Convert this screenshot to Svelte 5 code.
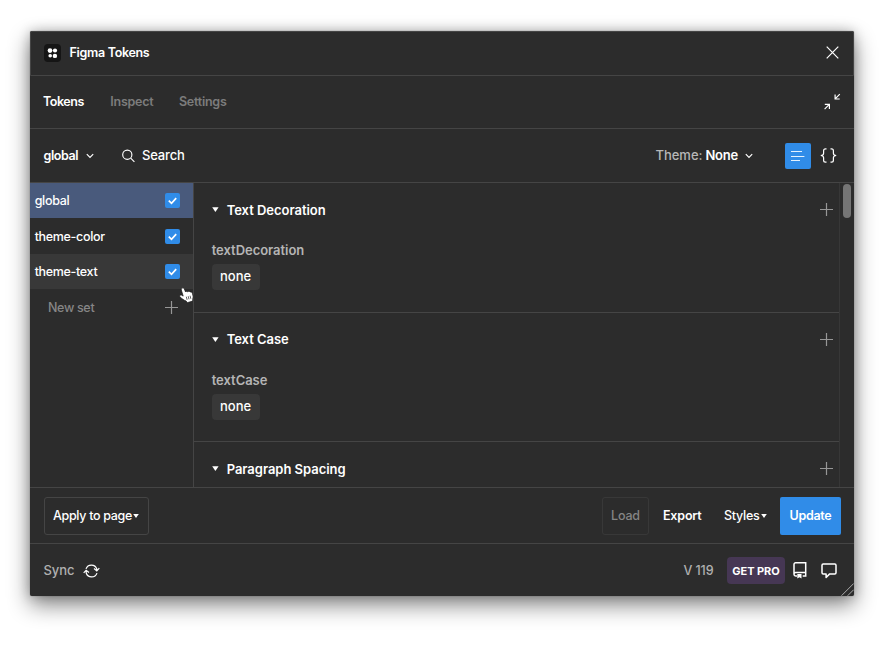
<script>
  let sets = $state([
    { name: 'global', checked: true },
    { name: 'theme-color', checked: true },
    { name: 'theme-text', checked: true }
  ]);
  let active = $state('global');
  let search = 'Search';
  const groups = [
    { title: 'Text Decoration', token: 'textDecoration', values: ['none'] },
    { title: 'Text Case', token: 'textCase', values: ['none'] },
    { title: 'Paragraph Spacing', token: '', values: [] }
  ];
</script>

{#snippet chevron()}
  <svg class="chev" width="8" height="6" viewBox="0 0 8 6"><path d="M.8 1.1 4 4.3 7.2 1.1" fill="none" stroke="#fff" stroke-width="1.2" /></svg>
{/snippet}

{#snippet plus()}
  <svg width="13" height="13" viewBox="0 0 13 13"><path d="M6.5 0v13M0 6.5h13" stroke="#979797" stroke-width="1.2" /></svg>
{/snippet}

{#snippet caret()}
  <svg class="caret" width="6" height="4" viewBox="0 0 6 4"><path d="M.2 0h5.600L3 3.900z" fill="#fff" /></svg>
{/snippet}

<div class="stage">
  <main class="window">
    <header class="title">
      <svg class="logo" width="17" height="18" viewBox="0 0 17 18">
        <rect width="17" height="18" rx="4" fill="#151515" />
        <g fill="#fff"><circle cx="6" cy="6.6" r="2.35" /><circle cx="11" cy="6.5" r="2.1" /><circle cx="6.2" cy="11.8" r="1.8" /><circle cx="10.9" cy="11.9" r="2.2" /></g>
      </svg>
      <span class="name">Figma Tokens</span>
      <svg class="close" width="13" height="13" viewBox="0 0 13 13"><path d="M.7.7l11.6 11.6M12.3.7.7 12.3" stroke="#fff" stroke-width="1.2" /></svg>
    </header>

    <nav class="tabs">
      <span class="tab on">Tokens</span>
      <span class="tab inspect">Inspect</span>
      <span class="tab settings">Settings</span>
      <svg class="shrink" width="18" height="18" viewBox="0 0 18 18" fill="none" stroke="#fff" stroke-width="1.2"><path d="M16.8 1.2 12.3 5.7M12.1 1.5V6h4.6M1.6 16.2l4.5-4.500M1.8 11.4h4.600v4.7" /></svg>
    </nav>

    <div class="toolbar">
      <span class="setname">global</span>
      {@render chevron()}
      <svg class="glass" width="13" height="14" viewBox="0 0 13 14" fill="none" stroke="#fff" stroke-width="1.15"><circle cx="5.3" cy="5.7" r="4.6" /><path d="m8.7 9.1 3.7 3.8" /></svg>
      <span class="search">{search}</span>
      <span class="theme">Theme:</span>
      <span class="themename">None</span>
      {@render chevron()}
      <span class="listbtn">
        <svg width="14" height="12" viewBox="0 0 14 12"><path d="M0 1.5h11M0 6.500h13.4M0 10.5h9" stroke="#e2f1ff" stroke-width="1.1" /></svg>
      </span>
      <svg class="braces" width="17" height="15" viewBox="0 0 17 15" fill="none" stroke="#fff" stroke-width="1.2"><path d="M6.500.8H5.500Q3.600.8 3.600 2.700v2.500Q3.600 7.300.8 7.500q2.800.2 2.800 2.300v2.500q0 1.900 1.900 1.900h1M10.500.8h1q1.900 0 1.900 1.900v2.500q0 2.100 2.800 2.300-2.800.2-2.800 2.300v2.500q0 1.900-1.900 1.900h-1" /></svg>
    </div>

    <section class="body">
      <aside>
        {#each sets as s}
          <div class="set" class:active={s.name === active} class:hover={s.name === 'theme-text'}>
            <span>{s.name}</span>
            <span class="check">
              {#if s.checked}<svg width="9" height="8" viewBox="0 0 9 8"><path d="M.8 3.7 3.5 6.3 8.2 1.2" fill="none" stroke="#fff" stroke-width="1.7" /></svg>{/if}
            </span>
          </div>
        {/each}
        <div class="newset"><span class="new">New set</span>{@render plus()}</div>
      </aside>
      <div class="list">
        {#each groups as g}
          <article>
            <div class="head">
              <svg width="7" height="5" viewBox="0 0 7 5"><path d="M.2.2h6.4L3.4 4.9z" fill="#fff" /></svg>
              <h2>{g.title}</h2>
              {@render plus()}
            </div>
            {#if g.token}<div class="token">{g.token}</div>{/if}
            {#each g.values as v}<span class="chip">{v}</span>{/each}
          </article>
        {/each}
      </div>
      <div class="scroll"><i></i></div>
    </section>

    <div class="actions">
      <div class="apply"><span>Apply to page</span>{@render caret()}</div>
      <div class="load"><span>Load</span></div>
      <span class="export">Export</span>
      <span class="styles">Styles</span>
      {@render caret()}
      <div class="update"><span>Update</span></div>
    </div>

    <footer>
      <span class="sync">Sync</span>
      <svg class="refresh" width="17" height="14" viewBox="0 0 17 14" fill="none" stroke="#fff" stroke-width="1.2"><path d="M3 4.9A5.7 5.7 0 0 1 13.8 5v1.3M14 9.1A5.7 5.7 0 0 1 3.2 9V6.2M11 4.5l2.8 2.4 2.5-2.7M.7 8.8l2.4-2.6L6 8.500" /></svg>
      <span class="version">V 119</span>
      <span class="pro"><span>GET PRO</span></span>
      <svg class="book" width="14" height="17" viewBox="0 0 14 17" fill="none" stroke="#fff" stroke-width="1.5"><path d="M4 14H2.7A1.7 1.7 0 0 1 1 12.3V2.4A1.6 1.6 0 0 1 2.6.8H12.7V14h-3M1 12.3q0-1.8 1.7-1.8h10" /><path d="M4.3 12.1h4.2v4.5l-2.1-1.3-2.1 1.3z" fill="#fff" stroke="none" /></svg>
      <svg class="bubble" width="16" height="16" viewBox="0 0 16 16" fill="none" stroke="#fff" stroke-width="1.5" stroke-linejoin="round"><path d="M2.2 1.1h11.6q1.2 0 1.2 1.2v7.4q0 1.2-1.2 1.2H8.7l-3.6 3.600v-3.600H2.2Q1 10.9 1 9.7V2.3Q1 1.1 2.2 1.1Z" /></svg>
    </footer>

    <svg class="grip" width="13" height="13" viewBox="0 0 13 13"><path d="M.5 12.7 12.7.5M6.7 12.7l6-6" stroke="#aaa" stroke-width="1" /></svg>
    <svg class="cursor" width="15" height="17" viewBox="0 0 15 17"><path d="M3 1.2c.9-.7 1.900-.2 2.300.8l1.300 3c.5-.9 1.600-.9 2.200-.1.600-.9 1.800-.7 2.300.2.800-.5 1.900 0 2.300 1.300.8 2.500.8 3.700.4 5.200l-.1 2.500-5.500 1.600-1-1.600C4.600 13.200 3 11.500 1 10 .1 9 1 7.700 2.400 8.100l1.800 1L2.300 3c-.2-.8 0-1.400.7-1.800z" fill="#fff" stroke="#151515" stroke-width=".7" /><path d="m7.300 9.700.8 3.100M9.200 9.200l.8 3.100M11.100 8.700l.7 3.100" stroke="#222" stroke-width=".7" /></svg>
  </main>
</div>

<style>
  :global(body) { background: #fff; overflow: hidden; }
  .stage { width: 881px; height: 656px; padding: 31px 0 0 30px; box-sizing: border-box; overflow: hidden; font: 500 12.5px/18px Inter, "Liberation Sans", sans-serif; color: #fff; }
  .window { position: relative; width: 824px; height: 565px; background: #2c2c2c; border-radius: 2px; box-shadow: 0 0 1px rgba(0,0,0,.55), 0 9px 22px rgba(0,0,0,.48), 0 0 12px rgba(0,0,0,.22); display: flex; flex-direction: column; }
  .window * { box-sizing: border-box; }
  span { white-space: nowrap; }
  svg { display: block; flex: none; }
  header, nav, .toolbar, .actions, footer { display: flex; align-items: center; flex: none; }
  .title { height: 45px; padding: 0 15px 1px 14px; border: 1px solid #454545; border-radius: 2px 2px 0 0; }
  .logo { margin-left: -1px; }
  .name { margin-left: 8.5px; font-weight: 600; letter-spacing: -.31px; }
  .close { margin: -1px -1px 0 auto; }
  .tabs { height: 53px; border-bottom: 1px solid #454545; padding: 0 13px; color: #7c7c7c; font-weight: 600; letter-spacing: -.25px; }
  .tab { width: 67.3px; }
  .tab.on { color: #fff; letter-spacing: -.45px; }
  .tab.inspect { width: 68.7px; }
  .shrink { margin: -1px 0 0 auto; }
  .toolbar { height: 54px; border-bottom: 1px solid #454545; padding: 0 17px 0 13.5px; }
  .setname { width: 42.5px; font-weight: 600; letter-spacing: -.4px; }
  .glass { margin-left: 28px; }
  .search { margin: -1px 0 0 7px; font-size: 13px; letter-spacing: -.15px; }
  .theme { margin: -1px 0 0 auto; color: #b8b8b8; font-size: 13px; width: 50px; }
  .themename { margin-top: -1px; font-size: 13px; width: 40px; font-weight: 600; letter-spacing: -.2px; }
  .listbtn { width: 26px; height: 26px; margin: 1px 9px 0 31.6px; background: #308ce8; border-radius: 2px; display: grid; place-items: center; }
  .body { display: flex; height: 305px; flex: none; border-bottom: 1px solid #454545; }
  aside { width: 164px; border-right: 1px solid #454545; flex: none; letter-spacing: -.33px; }
  .set { height: 35px; display: flex; align-items: center; justify-content: space-between; padding: 0 13px 0 4.7px; }
  .set:nth-child(2) { height: 36px; padding-top: 1px; }
  .set.active { background: #495a7c; }
  .set.hover { background: #383838; }
  .check { width: 15px; height: 15px; border-radius: 2px; background: #308ce8; display: grid; place-items: center; }
  .newset { height: 36px; display: flex; align-items: center; justify-content: space-between; padding: 0 15px 0 18px; color: #868686; }
  .new { padding-top: 1px; }
  .list { flex: 1; overflow: hidden; }
  article { height: 129.5px; border-bottom: 1px solid #454545; padding: 17.9px 6px 0 17.7px; }
  article:last-child { height: 45px; border-bottom: 0; }
  .head { display: flex; align-items: center; height: 18px; }
  h2 { margin: 0 auto 0 8px; font: inherit; font-size: 13px; font-weight: 600; letter-spacing: -.03px; white-space: nowrap; }
  .token { margin-top: 22.3px; color: #b5b5b5; height: 18px; font-size: 13px; font-weight: 600; letter-spacing: -.03px; }
  .chip { display: inline-flex; align-items: center; margin-top: 5px; height: 26px; width: 48px; padding: 0 0 2px 8.3px; background: #383838; border-radius: 4px; font-size: 13px; }
  .scroll { width: 15px; border-left: 1px solid #373737; padding: 1px 3px; }
  .scroll i { display: block; width: 8px; height: 34px; border-radius: 4px; background: #757575; }
  .actions { height: 56px; border-bottom: 1px solid #454545; padding: 0 13px 0 14px; }
  .apply { width: 105px; height: 38px; border: 1px solid #454545; border-radius: 3px; display: flex; align-items: center; padding-left: 8px; gap: 1px; letter-spacing: -.32px; }
  .load { margin-left: auto; width: 47px; height: 38px; border: 1px solid #383838; border-radius: 3px; display: grid; place-items: center; color: #858585; letter-spacing: -.2px; }
  .export { width: 61px; margin-left: 14px; font-weight: 600; letter-spacing: -.2px; }
  .styles { width: 37px; letter-spacing: -.25px; }
  .update { margin-left: 13px; width: 61px; height: 38px; border-radius: 2px; background: #308ce8; display: grid; place-items: center; font-weight: 600; letter-spacing: -.3px; }
  footer { height: 52px; padding: 1px 17px 0 13.4px; }
  .sync { color: #b0b0b0; font-size: 13px; width: 40px; margin-top: -1px; }
  .version { margin-left: auto; width: 43.5px; color: #b0b0b0; letter-spacing: -.1px; }
  .pro { width: 58px; height: 27px; border-radius: 4px; background: #463754; display: grid; place-items: center; font-size: 11px; font-weight: 700; letter-spacing: -.05px; }
  .book { margin-left: 8px; }
  .bubble { margin-left: 14px; }
  .grip { position: absolute; right: 0; bottom: 0; }
  .cursor { position: absolute; left: 148.5px; top: 255.5px; }
</style>
